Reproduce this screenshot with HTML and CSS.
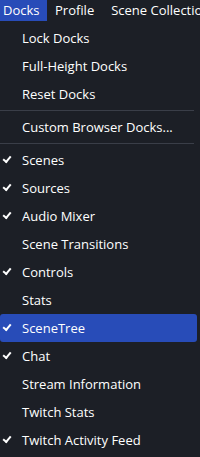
FILE: index.html
```html
<!DOCTYPE html>
<html>
<head>
<meta charset="utf-8">
<link rel="stylesheet" href="styles.css">
</head>
<body>
<div class="menubar">
  <div class="mb-item active">Docks</div>
  <div class="mb-item">Profile</div>
  <div class="mb-item">Scene Collection</div>
</div>
<div class="menu">
  <div class="item">Lock Docks</div>
  <div class="item">Full-Height Docks</div>
  <div class="item">Reset Docks</div>
  <div class="sep"></div>
  <div class="item">Custom Browser Docks...</div>
  <div class="sep"></div>
  <div class="item checked">Scenes</div>
  <div class="item checked">Sources</div>
  <div class="item checked">Audio Mixer</div>
  <div class="item">Scene Transitions</div>
  <div class="item checked">Controls</div>
  <div class="item">Stats</div>
  <div class="item checked selected">SceneTree</div>
  <div class="item checked">Chat</div>
  <div class="item">Stream Information</div>
  <div class="item">Twitch Stats</div>
  <div class="item checked">Twitch Activity Feed</div>
</div>
</body>
</html>
```
FILE: styles.css
```css
html, body {
  margin: 0;
  padding: 0;
  background: #1c1f26;
  width: 200px;
  height: 457px;
  overflow: hidden;
}
body {
  font-family: "Open Sans", "Noto Sans", sans-serif;
  font-size: 13px;
  color: #ffffff;
}
.menubar {
  display: flex;
  height: 21px;
  white-space: nowrap;
  overflow: hidden;
}
.mb-item {
  padding: 0 9px 0 8px;
  line-height: 21px;
  height: 21px;
  flex: none;
}
.mb-item.active {
  background: #284cb8;
  box-sizing: border-box;
  width: 47px;
  padding: 0 0 0 3px;
  margin-right: 0;
}
.menu {
  padding-top: 3px;
  width: 199px;
}
.item {
  position: relative;
  height: 28px;
  line-height: 28px;
  padding-left: 22px;
  margin-right: 2px;
  border-radius: 3px;
  white-space: nowrap;
}
.item.selected {
  background: #284cb8;
}
.item.checked::before {
  content: "";
  position: absolute;
  left: 3px;
  top: 10px;
  width: 6px;
  height: 3px;
  border-left: 2px solid #fff;
  border-bottom: 2px solid #fff;
  transform: rotate(-50deg);
}
.sep {
  height: 1px;
  background: #3a3e48;
  margin: 2px 5px 2px 0;
}
```
